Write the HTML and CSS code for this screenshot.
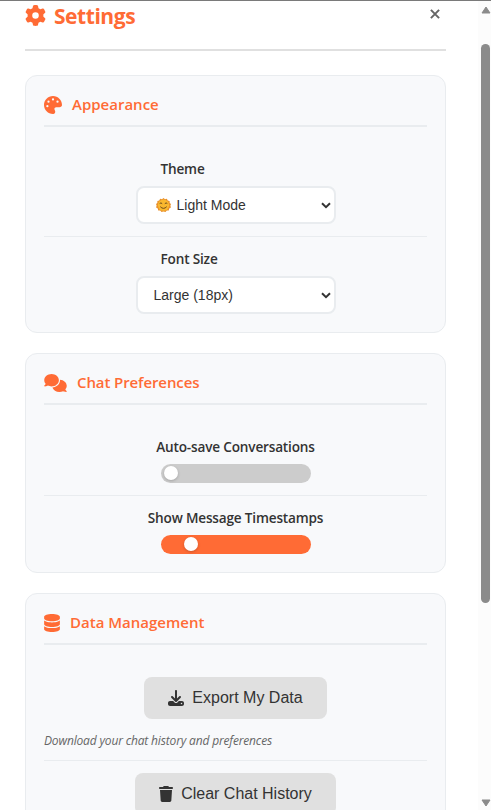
FILE: index.html
```html
<!DOCTYPE html>
<html lang="en">
<head>
<meta charset="utf-8">
<title>Settings</title>
<link rel="stylesheet" href="styles.css">
</head>
<body>
<div class="window">
  <main class="panel">
    <header class="header">
      <svg class="gear" viewBox="0 0 512 512"><path d="M495.9 166.6c3.2 8.7 .5 18.4-6.4 24.6l-43.3 39.4c1.1 8.3 1.7 16.8 1.7 25.4s-.6 17.1-1.7 25.4l43.3 39.4c6.9 6.2 9.6 15.9 6.4 24.6c-4.4 11.9-9.7 23.3-15.8 34.3l-4.7 8.1c-6.6 11-14 21.4-22.1 31.2c-5.9 7.2-15.7 9.6-24.5 6.8l-55.7-17.7c-13.4 10.3-28.2 18.9-44 25.4l-12.5 57.1c-2 9.1-9 16.3-18.2 17.8c-13.8 2.3-28 3.5-42.5 3.5s-28.7-1.2-42.5-3.5c-9.2-1.5-16.2-8.7-18.2-17.8l-12.5-57.1c-15.8-6.5-30.6-15.1-44-25.4L83.1 425.9c-8.8 2.8-18.6 .3-24.5-6.8c-8.1-9.8-15.5-20.2-22.1-31.2l-4.7-8.1c-6.1-11-11.4-22.4-15.8-34.3c-3.2-8.7-.5-18.4 6.4-24.6l43.3-39.4C64.6 273.1 64 264.6 64 256s.6-17.1 1.7-25.4L22.4 191.2c-6.9-6.2-9.6-15.9-6.4-24.6c4.4-11.9 9.7-23.3 15.8-34.3l4.7-8.1c6.6-11 14-21.4 22.1-31.2c5.9-7.2 15.7-9.6 24.5-6.8l55.7 17.7c13.4-10.3 28.2-18.9 44-25.4l12.5-57.1c2-9.1 9-16.3 18.2-17.8C227.3 1.2 241.5 0 256 0s28.7 1.2 42.5 3.5c9.2 1.5 16.2 8.7 18.2 17.8l12.5 57.1c15.8 6.5 30.6 15.1 44 25.4l55.7-17.7c8.8-2.8 18.6-.3 24.5 6.8c8.1 9.8 15.5 20.2 22.1 31.2l4.7 8.1c6.1 11 11.4 22.4 15.8 34.3zM256 336a80 80 0 1 0 0-160 80 80 0 1 0 0 160z"/></svg>
      <h1 class="title">Settings</h1>
      <svg class="close" viewBox="0 0 10 10"><path d="M.9.9 9.1 9.1M9.1.9.9 9.1"/></svg>
    </header>

    <section class="card">
      <h2 class="card-head">
        <svg class="icon-palette" viewBox="0 0 512 512"><path d="M512 256c0 .9 0 1.8 0 2.7c-.4 36.5-33.6 61.3-70.1 61.3H344c-26.5 0-48 21.5-48 48c0 3.4 .4 6.7 1 9.9c2.1 10.2 6.5 20 10.8 29.9c6.1 13.8 12.1 27.5 12.1 42c0 31.8-21.6 60.7-53.4 62c-3.5 .1-7 .2-10.6 .2C114.6 512 0 397.4 0 256S114.6 0 256 0S512 114.6 512 256zM128 288a32 32 0 1 0 -64 0 32 32 0 1 0 64 0zm0-96a32 32 0 1 0 0-64 32 32 0 1 0 0 64zM288 96a32 32 0 1 0 -64 0 32 32 0 1 0 64 0zm96 96a32 32 0 1 0 0-64 32 32 0 1 0 0 64z"/></svg>
        <span>Appearance</span>
      </h2>
      <div class="row row-select">
        <div class="label label-left"><span>Theme</span></div>
        <div class="select">
          <svg class="emoji" viewBox="0 0 15 15">
            <path fill="#e9912c" d="M7.5 0 9 1.2l1.900-.5.8 1.800 1.900.4.1 2L15 6l-.6 1.600.5 1.900-1.700 1-.4 1.900-2 .1L9.500 14l-2-.5-2 .5-1.300-1.500-2-.1-.4-1.900L.1 9.500l.5-1.900L0 6l1.300-1.100.1-2 1.900-.4.8-1.800L6 1.200z"/>
            <circle cx="7.500" cy="7.200" r="5.600" fill="#f9b82f"/>
            <path class="face" d="M3.700 5.500q1.300-1.300 2.500.2M8.800 5.700q1.300-1.500 2.500-.2M4.300 8.700q3.200 3.300 6.400 0"/>
          </svg>
          <span class="value">Light Mode</span>
          <svg class="chevron" viewBox="0 0 10 7"><path d="M1 1.300 5 5.200 9 1.300"/></svg>
        </div>
      </div>
      <div class="row row-select last">
        <div class="label label-left"><span>Font Size</span></div>
        <div class="select">
          <span class="value">Large (18px)</span>
          <svg class="chevron" viewBox="0 0 10 7"><path d="M1 1.300 5 5.200 9 1.300"/></svg>
        </div>
      </div>
    </section>

    <section class="card">
      <h2 class="card-head tight">
        <svg class="icon-comments" viewBox="0 0 640 512"><path d="M208 352c114.900 0 208-78.800 208-176S322.900 0 208 0S0 78.800 0 176c0 38.600 14.700 74.300 39.600 103.400c-3.500 9.400-8.700 17.700-14.200 24.700c-4.800 6.200-9.700 11-13.300 14.300c-1.800 1.600-3.300 2.900-4.300 3.700c-.5 .4-.9 .7-1.100 .8l-.2 .2C1 327.200-1.400 334.400 .8 340.900S9.100 352 16 352c21.800 0 43.800-5.600 62.100-12.500c9.200-3.500 17.800-7.400 25.200-11.400C134.100 343.300 169.800 352 208 352zM448 176c0 112.300-99.100 196.900-216.500 207C255.800 457.400 336.400 512 432 512c38.200 0 73.900-8.700 104.700-23.900c7.500 4 16 7.900 25.200 11.400c18.300 6.900 40.300 12.500 62.100 12.500c6.900 0 13.100-4.500 15.200-11.100c2.100-6.600-.2-13.800-5.800-17.900l-.2-.2c-.2-.2-.6-.4-1.100-.8c-1-.8-2.500-2-4.300-3.700c-3.600-3.300-8.500-8.100-13.300-14.300c-5.500-7-10.700-15.400-14.200-24.700c24.900-29 39.600-64.700 39.600-103.400c0-92.800-84.900-168.900-192.600-175.500c.4 5.100 .6 10.300 .6 15.500z"/></svg>
        <span>Chat Preferences</span>
      </h2>
      <div class="row row-toggle">
        <div class="label"><span>Auto-save Conversations</span></div>
        <div class="toggle"><i class="knob"></i></div>
      </div>
      <div class="row row-toggle last">
        <div class="label"><span>Show Message Timestamps</span></div>
        <div class="toggle on"><i class="knob"></i></div>
      </div>
    </section>

    <section class="card">
      <h2 class="card-head">
        <svg class="icon-database" viewBox="0 0 448 512"><path d="M448 80v48c0 44.200-100.300 80-224 80S0 172.200 0 128V80C0 35.800 100.300 0 224 0S448 35.800 448 80zM393.200 214.700c20.800-7.400 39.900-16.900 54.800-28.600V288c0 44.200-100.300 80-224 80S0 332.200 0 288V186.100c14.900 11.800 34 21.200 54.800 28.600C99.700 230.700 159.500 240 224 240s124.300-9.300 169.200-25.300zM0 346.100c14.900 11.800 34 21.200 54.800 28.600C99.700 390.700 159.500 400 224 400s124.300-9.300 169.200-25.300c20.800-7.400 39.900-16.900 54.800-28.600V432c0 44.200-100.300 80-224 80S0 476.200 0 432V346.100z"/></svg>
        <span>Data Management</span>
      </h2>
      <div class="row row-action">
        <div class="button">
          <svg class="icon-download" viewBox="0 0 512 512"><path d="M288 32c0-17.700-14.300-32-32-32s-32 14.300-32 32V274.700l-73.400-73.400c-12.500-12.500-32.800-12.500-45.300 0s-12.500 32.800 0 45.300l128 128c12.500 12.500 32.800 12.500 45.300 0l128-128c12.500-12.500 12.500-32.800 0-45.300s-32.800-12.500-45.300 0L288 274.700V32zM64 352c-35.300 0-64 28.700-64 64v32c0 35.300 28.700 64 64 64H448c35.300 0 64-28.700 64-64V416c0-35.300-28.700-64-64-64H346.500l-45.300 45.300c-25 25-65.500 25-90.500 0L165.500 352H64zm368 56a24 24 0 1 1 0 48 24 24 0 1 1 0-48z"/></svg>
          <span>Export My Data</span>
        </div>
        <p class="hint">Download your chat history and preferences</p>
      </div>
      <div class="row row-action last">
        <div class="button">
          <svg class="icon-trash" viewBox="0 0 448 512"><path d="M135.200 17.700L128 32H32C14.300 32 0 46.300 0 64S14.300 96 32 96H416c17.700 0 32-14.300 32-32s-14.300-32-32-32H320l-7.200-14.300C307.400 6.800 296.300 0 284.200 0H163.800c-12.100 0-23.200 6.800-28.600 17.700zM416 128H32L53.200 467c1.600 25.300 22.600 45 47.900 45H346.900c25.300 0 46.300-19.700 47.900-45L416 128z"/></svg>
          <span>Clear Chat History</span>
        </div>
      </div>
    </section>
  </main>
  <div class="scrollbar">
    <svg class="arrow" viewBox="0 0 10 8"><path d="M5 1 9 7H1z"/></svg>
    <div class="thumb"></div>
    <svg class="arrow down" viewBox="0 0 10 8"><path d="M1 1H9L5 7z"/></svg>
  </div>
</div>
</body>
</html>
```
FILE: styles.css
```css
* { box-sizing: border-box; }
body { margin: 0; background: #fff; font-family: "Open Sans", "Noto Sans", sans-serif; color: #333; }
svg { display: block; flex: none; fill: currentColor; }
h1, h2, p { margin: 0; }
span { white-space: nowrap; }

.window { display: flex; height: 810px; overflow: hidden; border-top: 1px solid #7a7a7a; }
.panel { flex: 1; padding: 0 32px 0 25px; }

.header { display: flex; align-items: flex-start; height: 50px; border-bottom: 2px solid #e0e0e0; margin-bottom: 24px; color: #ff6b35; }
.gear { width: 21px; height: 21px; margin-top: 4px; }
.title { flex: 1; margin-left: 8px; font-size: 21px; line-height: 30px; font-weight: 700; letter-spacing: -0.45px; }
.close { width: 10px; height: 10px; margin: 8px 6px 0 0; fill: none; stroke: #666; stroke-width: 2; }

.card { border: 1px solid #e9ecef; border-radius: 12px; background: #f8f9fb; padding: 18px; margin-bottom: 20px; }
.card-head { display: flex; align-items: center; height: 33px; padding-bottom: 10px; border-bottom: 2px solid #e9ecef; margin-bottom: 18px; font-size: 15px; line-height: 21px; font-weight: 550; color: #ff6b35; }
.card-head.tight { letter-spacing: -0.1px; }
.icon-palette { width: 18px; height: 18px; margin-right: 10px; }
.icon-comments { width: 23px; height: 18px; margin-right: 10px; }
.icon-database { width: 16px; height: 18px; margin-right: 10px; }

.row { display: flex; flex-direction: column; align-items: center; padding: 12px 0; border-bottom: 1px solid #e9ecef; }
.row.last { border-bottom: 0; }
.row-select { height: 92px; padding-top: 14px; }
.row-select.last { height: 77px; padding: 12px 0 0; }
.label { display: flex; justify-content: center; width: 200px; height: 22px; margin-bottom: 5px; font-size: 13.6px; line-height: 19px; font-weight: 600; letter-spacing: -0.18px; }
.label-left { width: 150px; justify-content: flex-start; }

.select { display: flex; align-items: center; width: 200px; height: 38px; padding: 0 3px 0 16px; border: 2px solid #e9ecef; border-radius: 8px; background: #fff; font: 14px "Liberation Sans", Arial, sans-serif; }
.value { flex: 1; }
.emoji { width: 15px; height: 15px; margin: 0 6px 0 2px; }
.face { fill: none; stroke: #6b4a1c; stroke-width: 1; }
.chevron { width: 10px; height: 7px; fill: none; stroke: #333; stroke-width: 2; }

.row-toggle { height: 73px; padding-top: 14px; }
.row-toggle.last { height: 58px; padding: 12px 0 0; }
.toggle { display: flex; align-items: flex-start; width: 150px; height: 19px; padding: 2px 0 0 3px; border-radius: 10px; background: #ccc; }
.toggle.on { background: #ff6b35; padding-left: 23px; }
.knob { width: 14px; height: 14px; border-radius: 50%; background: #fff; box-shadow: 0 1px 3px rgba(0,0,0,.2); }

.row-action { height: 98px; padding-top: 14px; }
.row-action.last { padding-top: 12px; }
.button { display: flex; flex: none; align-items: center; height: 42px; padding: 0 24px; border-radius: 8px; background: #e0e0e0; font: 16px "Liberation Sans", Arial, sans-serif; }
.icon-download { width: 16px; height: 16px; margin-right: 8px; }
.icon-trash { width: 14px; height: 16px; margin-right: 8px; }
.hint { align-self: flex-start; margin-top: 12px; font-size: 12px; line-height: 20px; font-style: italic; letter-spacing: -0.16px; color: #666; }

.scrollbar { display: flex; flex-direction: column; align-items: flex-start; width: 13px; padding: 5px 0 3px 3px; background: #fcfcfc; }
.arrow { width: 10px; height: 8px; fill: #8b8b8b; stroke: #8b8b8b; stroke-width: 1; stroke-linejoin: round; }
.thumb { width: 9px; height: 559px; margin-top: 30px; border-radius: 5px; background: #8b8b8b; }
.down { margin-top: auto; }
```
